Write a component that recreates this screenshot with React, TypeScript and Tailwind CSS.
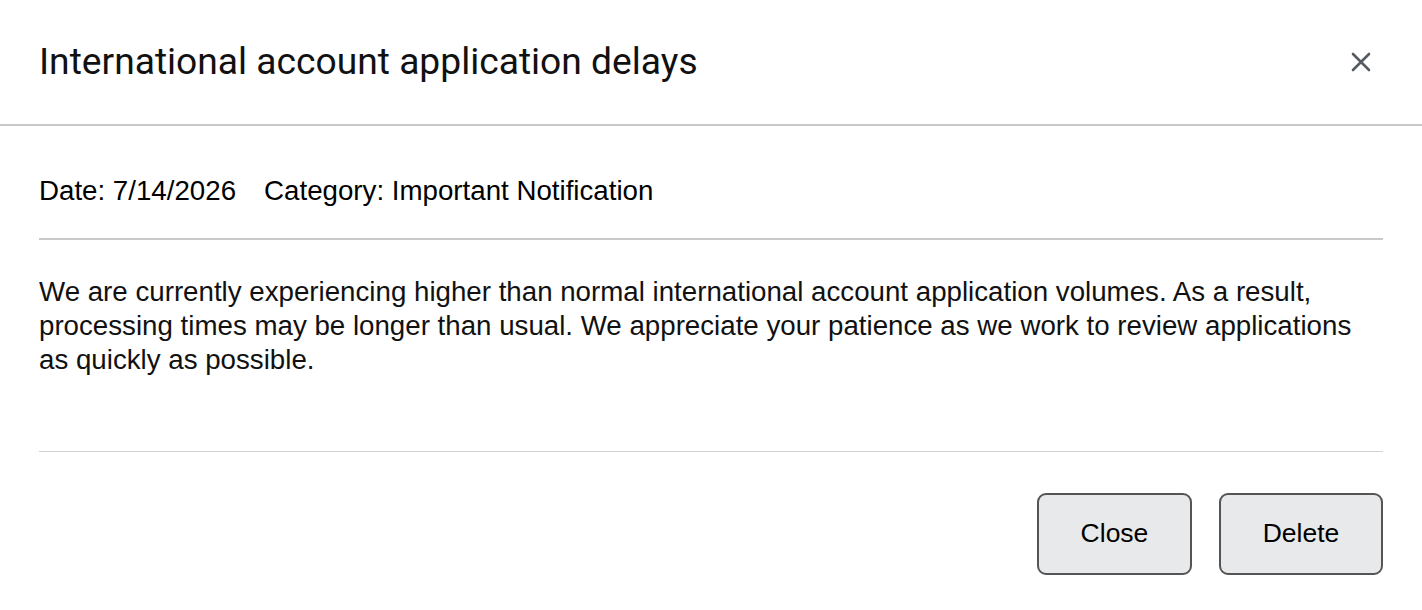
import React from 'react';

const body = { fontFamily: '"Liberation Sans", Arial, sans-serif' };

export default function NotificationDialog() {
  return (
    <div className="w-[1422px] h-[610px] bg-white text-black overflow-hidden">
      {/* header */}
      <div className="h-[126px] flex items-center justify-between pl-[39px] pr-[50px] border-b-2 border-[#c9c9c9]">
        <h1
          className="text-[37.2px] leading-none text-[#111]"
          style={{ fontFamily: 'Roboto, "Noto Sans", sans-serif' }}
        >
          International account application delays
        </h1>
        <button className="w-[22px] h-[22px] flex items-center justify-center text-[#565b61]">
          <svg width="22" height="22" viewBox="0 0 22 22" fill="none" stroke="currentColor" strokeWidth="2.6" strokeLinecap="round">
            <path d="M3 3 L19 19 M19 3 L3 19" />
          </svg>
        </button>
      </div>

      <div className="px-[39px]" style={body}>
        {/* meta */}
        <div className="h-[114px] flex items-center gap-[28px] text-[27.7px] border-b-2 border-[#c9c9c9] pt-[17px]">
          <span>Date: 7/14/2026</span>
          <span>Category: Important Notification</span>
        </div>

        {/* message */}
        <div className="h-[212px] pt-[35px] border-b border-[#d2d2d2]">
          <p className="text-[27.7px] leading-[34px] text-[#111]">
            We are currently experiencing higher than normal international account application volumes. As a result,
            processing times may be longer than usual. We appreciate your patience as we work to review applications
            as quickly as possible.
          </p>
        </div>

        {/* actions */}
        <div className="flex justify-end gap-[27px] pt-[41px]">
          <button className="w-[155px] h-[82px] rounded-[9px] border-2 border-[#555] bg-[#e8e9eb] text-[26.5px]">
            Close
          </button>
          <button className="w-[164px] h-[82px] rounded-[9px] border-2 border-[#555] bg-[#e8e9eb] text-[26.5px]">
            Delete
          </button>
        </div>
      </div>
    </div>
  );
}
